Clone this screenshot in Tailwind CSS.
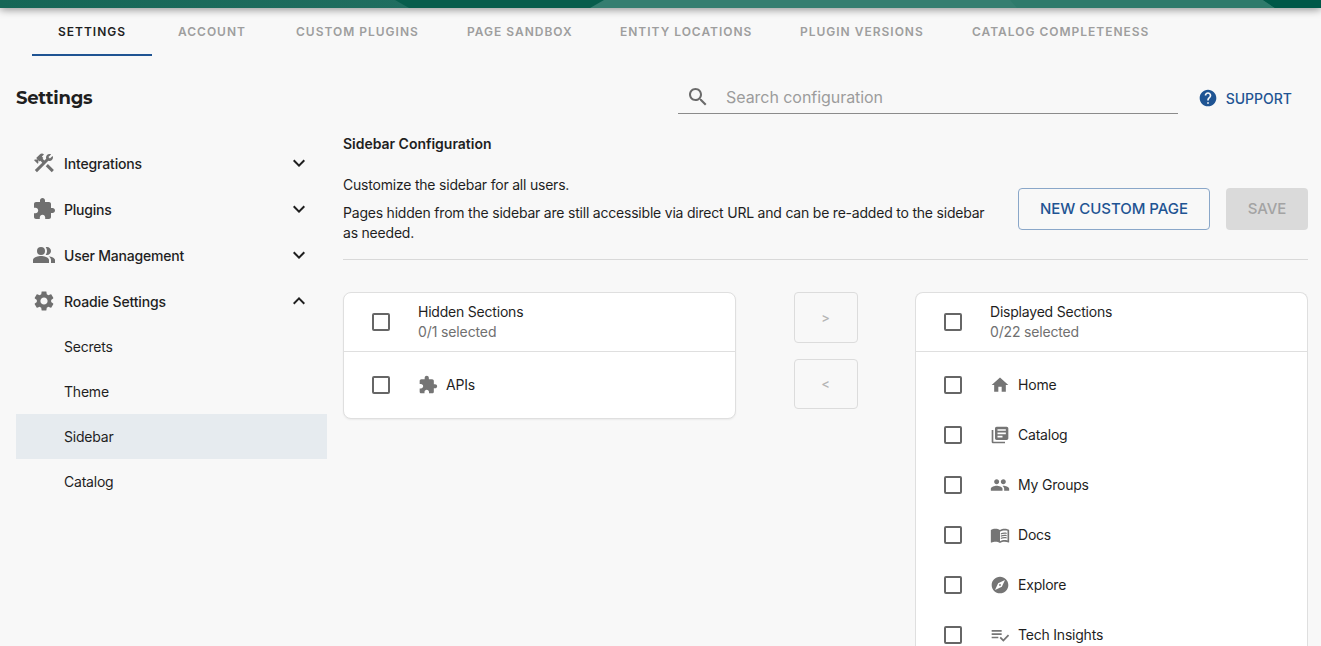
<!DOCTYPE html>
<html lang="en">
<head>
<meta charset="utf-8">
<title>Settings</title>
<script src="https://cdn.jsdelivr.net/npm/@tailwindcss/browser@4"></script>
</head>
<body class="h-[646px] overflow-hidden bg-[#f8f8f8] font-['Inter',sans-serif] text-sm leading-5 tracking-[-0.21px] text-[#1f1f1f]">
<svg class="hidden">
  <symbol id="extension" viewBox="0 0 24 24"><path d="M20.5 11H19V7c0-1.1-.9-2-2-2h-4V3.5C13 2.12 11.88 1 10.5 1S8 2.12 8 3.5V5H4c-1.1 0-1.99.9-1.99 2v3.8H3.5c1.49 0 2.7 1.21 2.7 2.7s-1.21 2.7-2.7 2.7H2V20c0 1.1.9 2 2 2h3.8v-1.5c0-1.49 1.21-2.7 2.7-2.7 1.49 0 2.7 1.21 2.7 2.7V22H17c1.1 0 2-.9 2-2v-4h1.5c1.38 0 2.5-1.12 2.5-2.5S21.88 11 20.5 11z"/></symbol>
  <symbol id="more" viewBox="0 0 24 24"><path d="M16.59 8.59 12 13.17 7.41 8.59 6 10l6 6 6-6z"/></symbol>
</svg>

<header class="relative z-10 h-2 shadow-[0_1px_8px_rgba(0,0,0,0.5)]">
  <svg class="block h-2 w-full" viewBox="0 0 1321 8" preserveAspectRatio="none">
    <defs><linearGradient id="bar"><stop offset="0" stop-color="#156656"/><stop offset="1" stop-color="#206e60"/></linearGradient></defs>
    <rect width="1321" height="8" fill="#075d4c"/>
    <path d="M0 0H395L409 8H0z" fill="url(#bar)"/>
    <path d="M604 0H1263L1275 8H590z" fill="#357e70"/>
    <path d="M1010 0H1263L1275 8H1017z" fill="#2e7a6b"/>
    <path d="M1263 0H1321V8H1275z" fill="#005848"/>
  </svg>
</header>

<nav class="flex h-12 pl-8 text-xs font-semibold tracking-[0.99px] text-[#9e9e9e] whitespace-nowrap">
  <div class="w-[120px] border-b-2 border-[#1f5493] pl-[26px] leading-[47px] text-[#1f1f1f]">SETTINGS</div>
  <div class="w-[118px] pl-[26px] leading-[47px]">ACCOUNT</div>
  <div class="w-[171px] pl-[26px] leading-[47px]">CUSTOM PLUGINS</div>
  <div class="w-[153px] pl-[26px] leading-[47px]">PAGE SANDBOX</div>
  <div class="w-[180px] pl-[26px] leading-[47px]">ENTITY LOCATIONS</div>
  <div class="w-[172px] pl-[26px] leading-[47px]">PLUGIN VERSIONS</div>
  <div class="pl-[26px] leading-[47px]">CATALOG COMPLETENESS</div>
</nav>

<section class="flex h-[76px] pt-6 pr-[29px] pl-4">
  <h1 class="w-[662px] pt-1 font-['Montserrat','Inter',sans-serif] text-lg leading-[28px] font-bold tracking-[-0.25px]">Settings</h1>
  <div class="flex h-[34px] w-[500px] items-center border-b border-[#8b8b8b] pl-2">
    <svg class="size-6 fill-[#6b6b6b]" viewBox="0 0 24 24"><path d="M15.5 14h-.79l-.28-.27C15.41 12.59 16 11.11 16 9.5 16 5.91 13.09 3 9.5 3S3 5.91 3 9.5 5.91 16 9.5 16c1.61 0 3.09-.59 4.23-1.57l.27.28v.79l5 4.99L20.49 19l-4.99-5zm-6 0C7.01 14 5 11.99 5 9.5S7.01 5 9.5 5 14 7.01 14 9.5 11.99 14 9.5 14z"/></svg>
    <span class="pl-4 text-base tracking-[-0.05px] text-[#9c9c9c]">Search configuration</span>
  </div>
  <div class="flex h-9 flex-1 items-center justify-end gap-2 text-[#1f5493]">
    <svg class="size-5 fill-current" viewBox="0 0 24 24"><path d="M12 2C6.48 2 2 6.48 2 12s4.48 10 10 10 10-4.48 10-10S17.52 2 12 2zm1 17h-2v-2h2v2zm2.07-7.75-.9.92C13.45 12.9 13 13.5 13 15h-2v-.5c0-1.1.45-2.1 1.17-2.83l1.24-1.26c.37-.36.59-.86.59-1.41 0-1.1-.9-2-2-2s-2 .9-2 2H8c0-2.21 1.79-4 4-4s4 1.79 4 4c0 .88-.36 1.68-.93 2.25z"/></svg>
    <span class="pt-0.5 font-medium tracking-normal">SUPPORT</span>
  </div>
</section>

<main class="flex h-[514px] overflow-hidden pl-4">
  <aside class="w-[311px] pt-2 font-medium">
    <div class="flex h-[46px] items-center pr-4 pl-4"><svg class="size-6 fill-[#6f6f6f]" viewBox="0 0 24 24"><path d="m13.7826 15.1719 2.1213-2.1213 5.9963 5.9962-2.1213 2.1213z"/><path d="M17.5 10c1.93 0 3.5-1.57 3.5-3.5 0-.58-.16-1.12-.41-1.6l-2.7 2.7-1.49-1.49 2.7-2.7c-.48-.25-1.02-.41-1.6-.41C15.57 3 14 4.57 14 6.5c0 .41.08.8.21 1.16l-1.85 1.85-1.78-1.78.71-.71-1.41-1.41L12 3.49c-1.17-1.17-3.07-1.17-4.24 0L4.22 7.03l1.41 1.41H2.81l-.71.71 3.54 3.54.71-.71V9.15l1.41 1.41.71-.71 1.78 1.78-7.41 7.41 2.12 2.12L16.34 9.79c.36.13.75.21 1.16.21z"/></svg><span class="flex-1 pt-0.5 pl-2 tracking-[-0.15px]">Integrations</span><svg class="size-6 fill-[#1f1f1f]"><use href="#more"/></svg></div>
    <div class="flex h-[46px] items-center pr-4 pl-4"><svg class="size-6 fill-[#6f6f6f]"><use href="#extension"/></svg><span class="flex-1 pt-0.5 pl-2">Plugins</span><svg class="size-6 fill-[#1f1f1f]"><use href="#more"/></svg></div>
    <div class="flex h-[46px] items-center pr-4 pl-4"><svg class="size-6 fill-[#6f6f6f]" viewBox="0 0 24 24"><path d="M16.67 13.13C18.04 14.06 19 15.32 19 17v3h4v-3c0-2.18-3.57-3.47-6.33-3.87z"/><circle cx="9" cy="8" r="4"/><path d="M15 12c2.21 0 4-1.79 4-4s-1.79-4-4-4c-.47 0-.91.1-1.33.24C14.5 5.27 15 6.58 15 8s-.5 2.73-1.33 3.76c.42.14.86.24 1.33.24zM9 13c-2.67 0-8 1.34-8 4v3h16v-3c0-2.66-5.33-4-8-4z"/></svg><span class="flex-1 pt-0.5 pl-2">User Management</span><svg class="size-6 fill-[#1f1f1f]"><use href="#more"/></svg></div>
    <div class="flex h-[46px] items-center pr-4 pl-4"><svg class="size-6 fill-[#6f6f6f]" viewBox="0 0 24 24"><path d="M19.14 12.94c.04-.3.06-.61.06-.94 0-.32-.02-.64-.07-.94l2.03-1.58c.18-.14.23-.41.12-.61l-1.92-3.32c-.12-.22-.37-.29-.59-.22l-2.39.96c-.5-.38-1.03-.7-1.62-.94l-.36-2.54c-.04-.24-.24-.41-.48-.41h-3.84c-.24 0-.43.17-.47.41l-.36 2.54c-.59.24-1.13.57-1.62.94l-2.39-.96c-.22-.08-.47 0-.59.22L2.74 8.87c-.12.21-.08.47.12.61l2.03 1.58c-.05.3-.09.63-.09.94s.02.64.07.94l-2.03 1.58c-.18.14-.23.41-.12.61l1.92 3.32c.12.22.37.29.59.22l2.39-.96c.5.38 1.03.7 1.62.94l.36 2.54c.05.24.24.41.48.41h3.84c.24 0 .44-.17.47-.41l.36-2.54c.59-.24 1.13-.56 1.62-.94l2.39.96c.22.08.47 0 .59-.22l1.92-3.32c.12-.22.07-.47-.12-.61l-2.01-1.58zM12 15.6c-1.98 0-3.6-1.62-3.6-3.6s1.62-3.6 3.6-3.6 3.6 1.62 3.6 3.6-1.62 3.6-3.6 3.6z"/></svg><span class="flex-1 pt-0.5 pl-2 tracking-[-0.15px]">Roadie Settings</span><svg class="size-6 fill-[#1f1f1f]" viewBox="0 0 24 24"><path d="m12 8-6 6 1.41 1.41L12 10.83l4.59 4.58L18 14z"/></svg></div>
    <div class="h-[45px] pl-12 leading-[46px] font-normal">Secrets</div>
    <div class="h-[45px] pl-12 leading-[46px] font-normal">Theme</div>
    <div class="h-[45px] bg-[#e6ebef] pl-12 leading-[46px] font-normal">Sidebar</div>
    <div class="h-[45px] pl-12 leading-[46px] font-normal">Catalog</div>
  </aside>

  <div class="ml-4 w-[965px]">
    <div class="flex h-[128px] border-b border-[#d9d9d9]">
      <div class="w-[659px] shrink-0 whitespace-nowrap">
        <h2 class="h-[43px] leading-[24px] font-semibold tracking-[-0.02px]">Sidebar Configuration</h2>
        <p>Customize the sidebar for all users.</p>
        <p class="pt-2">Pages hidden from the sidebar are still accessible via direct URL and can be re-added to the sidebar<br>as needed.</p>
      </div>
      <div class="flex gap-4 pt-14 pl-4 text-[15px] font-medium tracking-[-0.05px] whitespace-nowrap">
        <div class="h-[42px] w-[192px] rounded border border-[#8aa7c9] text-center leading-[40px] text-[#1f5493]">NEW CUSTOM PAGE</div>
        <div class="h-[42px] w-[82px] rounded bg-[#dadada] text-center leading-[42px] text-[#a3a3a3]">SAVE</div>
      </div>
    </div>

    <div class="flex items-start justify-between pt-8">
      <section class="w-[393px] rounded-lg border border-[#dfdfdf] bg-white pb-2 shadow-[0_1px_2px_rgba(0,0,0,0.06)]">
        <div class="flex h-[59px] items-center border-b border-[#dfdfdf] pl-7">
          <i class="size-[18px] rounded-[2px] border-2 border-[#666]"></i>
          <div class="pl-7">Hidden Sections<br><span class="tracking-[-0.12px] text-[#707070]">0/1 selected</span></div>
        </div>
        <div class="mt-2 flex h-[50px] items-center pl-7"><i class="size-[18px] rounded-[2px] border-2 border-[#666]"></i><svg class="ml-7 size-5 fill-[#757575]"><use href="#extension"/></svg><span class="pl-2">APIs</span></div>
      </section>

      <div class="flex flex-col gap-4 text-[13px] font-medium text-[#b5b5b5]">
        <div class="flex h-[51px] w-16 items-center justify-center rounded border border-[#dcdcdc]">&gt;</div>
        <div class="flex h-[50px] w-16 items-center justify-center rounded border border-[#dcdcdc]">&lt;</div>
      </div>

      <section class="h-[354px] w-[393px] overflow-hidden rounded-t-lg border border-b-0 border-[#dfdfdf] bg-white">
        <div class="flex h-[59px] items-center border-b border-[#dfdfdf] pl-7">
          <i class="size-[18px] rounded-[2px] border-2 border-[#666]"></i>
          <div class="pl-7">Displayed Sections<br><span class="tracking-[-0.17px] text-[#707070]">0/22 selected</span></div>
        </div>
        <div class="mt-2 flex h-[50px] items-center pl-7"><i class="size-[18px] rounded-[2px] border-2 border-[#666]"></i><svg class="ml-7 size-5 fill-[#757575]" viewBox="0 0 24 24"><path d="M10 20v-6h4v6h5v-8h3L12 3 2 12h3v8z"/></svg><span class="pl-2">Home</span></div>
        <div class="flex h-[50px] items-center pl-7"><i class="size-[18px] rounded-[2px] border-2 border-[#666]"></i><svg class="ml-7 size-5 fill-[#757575]" viewBox="0 0 24 24"><path d="M4 6H2v14c0 1.1.9 2 2 2h14v-2H4V6zm16-4H8c-1.1 0-2 .9-2 2v12c0 1.1.9 2 2 2h12c1.1 0 2-.9 2-2V4c0-1.1-.9-2-2-2zm-1 9H9V9h10v2zm-4 4H9v-2h6v2zm4-8H9V5h10v2z"/></svg><span class="pl-2">Catalog</span></div>
        <div class="flex h-[50px] items-center pl-7"><i class="size-[18px] rounded-[2px] border-2 border-[#666]"></i><svg class="ml-7 size-5 fill-[#757575]" viewBox="0 0 24 24"><path d="M16 11c1.66 0 2.99-1.34 2.99-3S17.66 5 16 5c-1.66 0-3 1.34-3 3s1.34 3 3 3zm-8 0c1.66 0 2.99-1.34 2.99-3S9.66 5 8 5C6.34 5 5 6.34 5 8s1.34 3 3 3zm0 2c-2.33 0-7 1.17-7 3.5V19h14v-2.5c0-2.33-4.67-3.5-7-3.5zm8 0c-.29 0-.62.02-.97.05 1.16.84 1.97 1.97 1.97 3.45V19h6v-2.5c0-2.33-4.67-3.5-7-3.5z"/></svg><span class="pl-2">My Groups</span></div>
        <div class="flex h-[50px] items-center pl-7"><i class="size-[18px] rounded-[2px] border-2 border-[#666]"></i><svg class="ml-7 size-5 fill-[#757575]" viewBox="0 0 24 24"><path d="M21 5c-1.11-.35-2.33-.5-3.5-.5-1.95 0-4.05.4-5.5 1.5-1.45-1.1-3.55-1.5-5.5-1.5S2.45 4.9 1 6v14.65c0 .25.25.5.5.5.1 0 .15-.05.25-.05C3.1 20.45 5.05 20 6.5 20c1.95 0 4.05.4 5.5 1.5 1.35-.85 3.8-1.5 5.5-1.5 1.65 0 3.35.3 4.75 1.05.1.05.15.05.25.05.25 0 .5-.25.5-.5V6c-.6-.45-1.25-.75-2-1zm0 13.5c-1.1-.35-2.3-.5-3.5-.5-1.7 0-4.15.65-5.5 1.5V8c1.35-.85 3.8-1.5 5.5-1.5 1.2 0 2.4.15 3.5.5v11.5z"/><path d="M17.5 10.5c.88 0 1.73.09 2.5.26V9.24c-.79-.15-1.64-.24-2.5-.24-1.7 0-3.24.29-4.5.83v1.66c1.13-.64 2.7-.99 4.5-.99zM13 12.49v1.66c1.13-.64 2.7-.99 4.5-.99.88 0 1.73.09 2.5.26V11.9c-.79-.15-1.64-.24-2.5-.24-1.7 0-3.24.3-4.5.83zM17.5 14.33c-1.7 0-3.24.29-4.5.83v1.66c1.13-.64 2.7-.99 4.5-.99.88 0 1.73.09 2.5.26v-1.52c-.79-.16-1.64-.24-2.5-.24z"/></svg><span class="pl-2">Docs</span></div>
        <div class="flex h-[50px] items-center pl-7"><i class="size-[18px] rounded-[2px] border-2 border-[#666]"></i><svg class="ml-7 size-5 fill-[#757575]" viewBox="0 0 24 24"><path d="M12 10.9c-.61 0-1.1.49-1.1 1.1s.49 1.1 1.1 1.1c.61 0 1.1-.49 1.1-1.1s-.49-1.1-1.1-1.1zM12 2C6.48 2 2 6.48 2 12s4.48 10 10 10 10-4.48 10-10S17.52 2 12 2zm2.19 12.19L6 18l3.81-8.19L18 6l-3.81 8.19z"/></svg><span class="pl-2">Explore</span></div>
        <div class="flex h-[50px] items-center pl-7"><i class="size-[18px] rounded-[2px] border-2 border-[#666]"></i><svg class="ml-7 size-5 fill-[#757575]" viewBox="0 0 24 24"><path d="M14 10H2v2h12v-2zm0-4H2v2h12V6zM2 16h8v-2H2v2zm19.5-4.5L23 13l-6.99 7-4.51-4.5L13 14l3.01 3 5.49-5.5z"/></svg><span class="pl-2">Tech Insights</span></div>
      </section>
    </div>
  </div>
</main>
</body>
</html>
